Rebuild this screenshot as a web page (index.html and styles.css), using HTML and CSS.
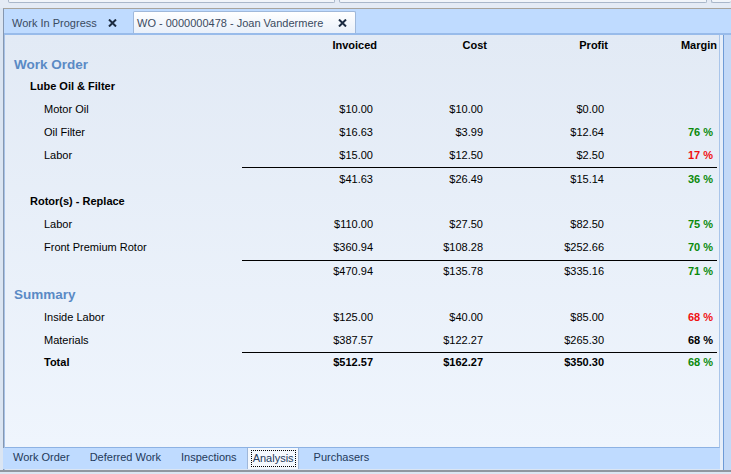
FILE: index.html
```html
<!DOCTYPE html>
<html>
<head>
<meta charset="utf-8">
<link rel="stylesheet" href="styles.css">
</head>
<body>
<div class="topbar">
  <div class="tbox b1"></div>
  <div class="tbox b2"></div>
  <div class="tbox b3"></div>
</div>
<div class="frame">
  <div class="tabstrip">
    <div class="dtab">
      <span>Work In Progress</span>
      <svg class="xicon" width="9" height="8" viewBox="0 0 9 8"><path d="M1 0.5 L8 7.5 M8 0.5 L1 7.5" stroke="#1c2b40" stroke-width="2"/></svg>
    </div>
    <div class="dtab active">
      <span>WO - 0000000478 - Joan Vandermere</span>
      <svg class="xicon" width="9" height="8" viewBox="0 0 9 8"><path d="M1 0.5 L8 7.5 M8 0.5 L1 7.5" stroke="#1c2b40" stroke-width="2"/></svg>
    </div>
  </div>
  <div class="bodyrow">
    <div class="doc">
      <div class="content">
        <div class="row head h19">
          <div></div><div class="n">Invoiced</div><div class="n">Cost</div><div class="n">Profit</div><div class="n">Margin</div>
        </div>
        <div class="row h21"><div class="sect">Work Order</div></div>
        <div class="row h22"><div class="grp">Lube Oil &amp; Filter</div></div>
        <div class="row h23"><div class="item">Motor Oil</div><div class="v">$10.00</div><div class="v">$10.00</div><div class="v">$0.00</div><div class="v"></div></div>
        <div class="row h23"><div class="item">Oil Filter</div><div class="v">$16.63</div><div class="v">$3.99</div><div class="v">$12.64</div><div class="v m green">76 %</div></div>
        <div class="row h23"><div class="item">Labor</div><div class="v">$15.00</div><div class="v">$12.50</div><div class="v">$2.50</div><div class="v m red">17 %</div></div>
        <div class="rule r1"></div>
        <div class="row h21"><div></div><div class="v">$41.63</div><div class="v">$26.49</div><div class="v">$15.14</div><div class="v m green">36 %</div></div>
        <div class="row h23"><div class="grp">Rotor(s) - Replace</div></div>
        <div class="row h23"><div class="item">Labor</div><div class="v">$110.00</div><div class="v">$27.50</div><div class="v">$82.50</div><div class="v m green">75 %</div></div>
        <div class="row h23"><div class="item">Front Premium Rotor</div><div class="v">$360.94</div><div class="v">$108.28</div><div class="v">$252.66</div><div class="v m green">70 %</div></div>
        <div class="rule r2"></div>
        <div class="row h19"><div></div><div class="v">$470.94</div><div class="v">$135.78</div><div class="v">$335.16</div><div class="v m green">71 %</div></div>
        <div class="row h25 low"><div class="sect">Summary</div></div>
        <div class="row h23"><div class="item">Inside Labor</div><div class="v">$125.00</div><div class="v">$40.00</div><div class="v">$85.00</div><div class="v m red">68 %</div></div>
        <div class="row h23"><div class="item">Materials</div><div class="v">$387.57</div><div class="v">$122.27</div><div class="v">$265.30</div><div class="v m">68 %</div></div>
        <div class="rule r1"></div>
        <div class="row h18 total"><div class="item">Total</div><div class="v">$512.57</div><div class="v">$162.27</div><div class="v">$350.30</div><div class="v m green">68 %</div></div>
      </div>
      <div class="btabs">
        <div class="btab">Work Order</div>
        <div class="btab">Deferred Work</div>
        <div class="btab">Inspections</div>
        <div class="btab sel"><span class="focus">Analysis</span></div>
        <div class="btab">Purchasers</div>
      </div>
    </div>
    <div class="rstrip"></div>
  </div>
</div>
<div class="bottomline"></div>
</body>
</html>
```
FILE: styles.css
```css
* { box-sizing: border-box; }
html, body { margin: 0; padding: 0; }
body {
  width: 731px;
  height: 474px;
  overflow: hidden;
  background: #dbe5f2;
  font-family: "Liberation Sans", Arial, sans-serif;
  font-size: 11px;
  color: #000;
}
.topbar {
  height: 8px;
  display: flex;
  gap: 4px;
  padding-left: 8px;
  background: #e4ebf5;
}
.tbox {
  height: 3px;
  background: #f1f5fa;
  border: 1px solid #a9b7ca;
  border-top: none;
  border-radius: 0 0 2px 2px;
}
.b1 { width: 327px; }
.b2 { width: 368px; }
.b3 { flex: 1; border-right: none; }

.frame {
  margin-left: 3px;
  border-left: 1px solid #8597b0;
  border-top: 1px solid #a8a49c;
}
.tabstrip {
  height: 26px;
  background: #bfdbff;
  border-bottom: 2px solid #98bbea;
  display: flex;
  align-items: flex-end;
  padding-left: 1px;
}
.dtab {
  display: flex;
  align-items: center;
  height: 20px;
  color: #3a4a60;
  white-space: nowrap;
}
.dtab:first-child {
  width: 126px;
  padding: 0 14px 0 7px;
}
.dtab.active {
  width: 223px;
  height: 22px;
  margin-left: 2px;
  padding: 0 8px 0 3px;
  background: linear-gradient(#ffffff, #e9f0fa);
  border: 1px solid #9fb8da;
  border-bottom: none;
  border-radius: 2px 2px 0 0;
}
.xicon { margin-left: auto; flex: none; }

.bodyrow {
  display: flex;
  height: 435px;
}
.doc {
  width: 716px;
  display: flex;
  flex-direction: column;
  border-left: 1px solid #a6c1e6;
}
.content {
  height: 413px;
  padding-left: 9px;
  background: linear-gradient(#e2eaf5, #eff5fd);
  border-bottom: 1px solid #8db2e3;
  border-right: 1px solid #a9c5ea;
}
.row {
  display: grid;
  grid-template-columns: 228px 135px 110px 121px 109px;
  align-items: center;
}
.h18 { height: 18px; }
.h19 { height: 19px; }
.h21 { height: 21px; }
.h22 { height: 22px; }
.h23 { height: 23px; }
.h25 { height: 25px; }
.low { padding-top: 4px; }
.head .n { text-align: right; font-weight: bold; }
.sect {
  font-size: 13.5px;
  font-weight: bold;
  color: #5a8ac5;
  white-space: nowrap;
}
.grp { padding-left: 16px; font-weight: bold; white-space: nowrap; }
.item { padding-left: 30px; white-space: nowrap; }
.v { text-align: right; padding-right: 4px; }
.m { font-weight: bold; }
.green { color: #0b8a0b; }
.red { color: #f01010; }
.total { font-weight: bold; }
.rule {
  height: 1px;
  background: #000;
  margin-left: 228px;
  width: 475px;
}
.r1 { margin-top: 1px; }
.r2 { margin-top: 2px; }

.btabs {
  height: 21px;
  background: #bfdbff;
  display: flex;
  margin-left: -2px;
}
.btab {
  padding: 0 10px;
  height: 19px;
  line-height: 18px;
  color: #23395a;
  white-space: nowrap;
}
.btab.sel {
  margin-left: 0;
  padding: 1px 2px 0 3px;
  height: 21px;
  background: #f4f8fd;
  border-left: 1px solid #9fb8da;
  border-right: 1px solid #9fb8da;
  margin-right: 5px;
}
.focus {
  display: inline-block;
  line-height: 15px;
  padding: 0 1px;
  border: 1px dotted #000;
  color: #23395a;
}
.rstrip {
  flex: 1;
  background: linear-gradient(to right, #e6eef9 0, #e6eef9 3px, #6f9bd6 3px, #6f9bd6 4px, #c3d9f7 4px);
}
.bottomline {
  height: 2px;
  background: #8f96a0;
}
```
